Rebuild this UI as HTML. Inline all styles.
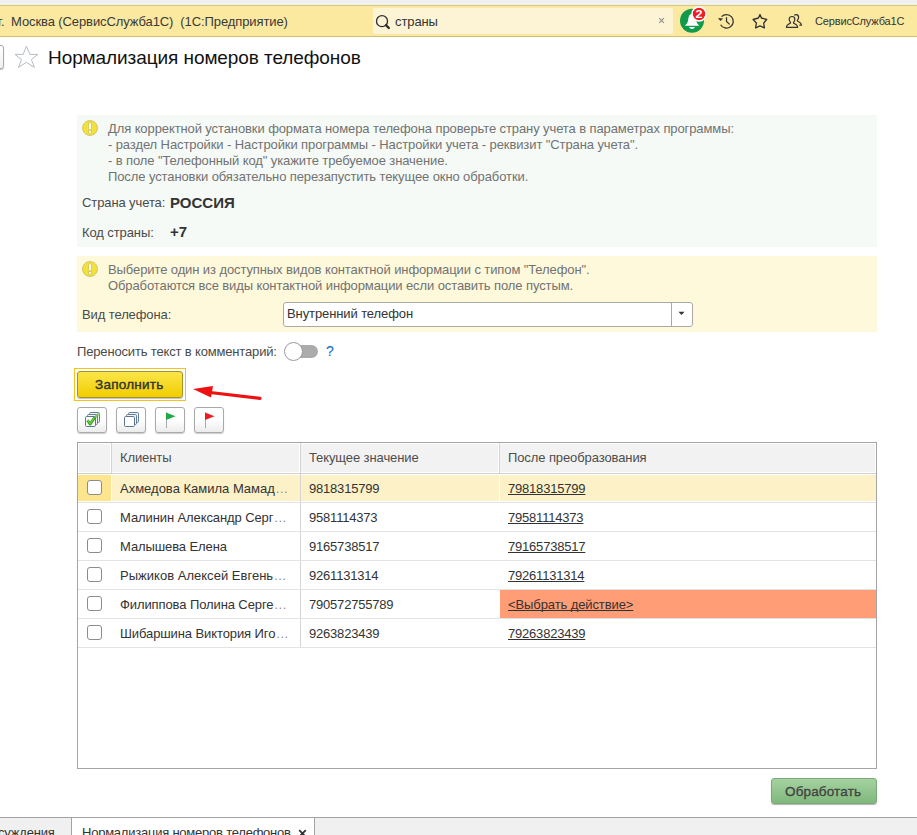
<!DOCTYPE html>
<html><head><meta charset="utf-8">
<style>
*{margin:0;padding:0;box-sizing:border-box}
html,body{width:917px;height:835px;overflow:hidden;background:#fff}
body{position:relative;font-family:"Liberation Sans",sans-serif;font-size:13px;color:#333}
.a{position:absolute}
.t{position:absolute;white-space:nowrap;line-height:16px;font-size:13px;letter-spacing:-0.1px;text-decoration-skip-ink:none}
svg{position:absolute;overflow:visible}
</style></head><body>

<!-- top strip -->
<div class="a" style="left:0;top:0;width:917px;height:5px;background:#f0f0f0"></div>
<div class="a" style="left:0;top:5px;width:917px;height:32px;background:#fbe9a0;border-top:1px solid #d8c679;border-bottom:1px solid #d2bf6f"></div>
<div class="t" style="left:-2px;top:14px;color:#3a3a3a">г.</div>
<div class="t" style="left:11px;top:14px;color:#3a3a3a">Москва (СервисСлужба1С)&nbsp;&nbsp;(1С:Предприятие)</div>

<!-- search -->
<div class="a" style="left:373px;top:8px;width:300px;height:26px;background:#fdf4d5;border-radius:2px"></div>
<svg style="left:374px;top:12px" width="18" height="18" viewBox="0 0 18 18"><circle cx="8" cy="9.2" r="5.5" fill="none" stroke="#2e2e2e" stroke-width="1.3"/><path d="M12 13.2 L14.8 16" stroke="#2e2e2e" stroke-width="2.4" stroke-linecap="round"/></svg>
<div class="t" style="left:395px;top:14px;color:#333">страны</div>
<svg style="left:657px;top:16px" width="9" height="9" viewBox="0 0 9 9"><path d="M2.2 2.2 L6.9 6.9 M6.9 2.2 L2.2 6.9" stroke="#8f8f8f" stroke-width="1.15"/></svg>

<!-- bell -->
<svg style="left:680px;top:6px" width="28" height="28" viewBox="0 0 28 28">
<circle cx="12" cy="14.8" r="12" fill="#109a4a"/>
<path d="M4.9 19.7 L19.3 19.7 C17.7 18.3 16.3 16.6 15.9 13.3 C15.6 10.2 14.5 7.8 12.1 7.8 C9.7 7.8 8.6 10.2 8.3 13.3 C7.9 16.6 6.5 18.3 4.9 19.7 Z" fill="#fff"/>
<path d="M9.1 21 L14.9 21 C14.2 22.5 13.2 22.9 12 22.9 C10.8 22.9 9.8 22.5 9.1 21 Z" fill="#fff"/>
<circle cx="19" cy="8" r="7.0" fill="#f21d24" stroke="#fff" stroke-width="1.6"/>
<text x="0" y="0" transform="translate(19.1 12.0) scale(1.12 1)" font-family="Liberation Sans" font-weight="700" font-size="11.2" fill="#fff" text-anchor="middle">2</text>
</svg>

<!-- history -->
<svg style="left:714px;top:8px" width="28" height="26" viewBox="0 0 28 26">
<path d="M6.61 16.7 A6.8 6.8 0 1 0 7.53 8.66" fill="none" stroke="#333" stroke-width="1.25"/>
<path d="M4 10 L9.1 10.5 L6.4 13.1Z" fill="#333"/>
<path d="M12.5 9.2 L12.5 13.4 L15.6 16.4" fill="none" stroke="#333" stroke-width="1.25"/>
</svg>
<!-- star -->
<svg style="left:748px;top:8px" width="28" height="26" viewBox="0 0 28 26">
<path d="M12 6.5 L13.4 10 L18.7 11.5 L15.7 15 L16.4 19.9 L12 17.8 L7.6 19.9 L8.4 15 L5.1 11.5 L10.4 10 Z" fill="none" stroke="#333" stroke-width="1.3" stroke-linejoin="round"/>
</svg>
<!-- users -->
<svg style="left:782px;top:8px" width="28" height="26" viewBox="0 0 28 26">
<path d="M4.4 19.3 C4.2 17.5 5.5 16.5 8.2 15.2 C8.7 15 8.6 14.5 8.3 14.1 C7.5 13.2 7.2 12.3 7.2 11.2 C7.2 9.4 8.4 8.5 10 8.5 C11.6 8.5 12.8 9.4 12.8 11.2 C12.8 12.3 12.5 13.2 11.7 14.1 C11.4 14.5 11.3 15 11.8 15.2 C14.5 16.5 15.8 17.5 15.6 19.3 Z" fill="none" stroke="#333" stroke-width="1.2" stroke-linejoin="round"/>
<path d="M12.3 7.2 C12.8 6.8 13.3 6.6 14 6.6 C15.6 6.6 16.6 7.6 16.6 9.3 C16.6 10.4 16.3 11.2 15.5 12.1 C15.2 12.5 15.2 13 15.7 13.2 C18.2 14.4 19.6 15.3 19.4 17.1 L17.4 17.1" fill="none" stroke="#333" stroke-width="1.2" stroke-linejoin="round"/>
</svg>
<div class="t" style="left:815px;top:13px;font-size:11px;color:#333;letter-spacing:-0.15px">СервисСлужба1С</div>

<!-- title row -->
<div class="a" style="left:-20px;top:45px;width:24px;height:24px;border:1px solid #a8a8a8;border-radius:3px;background:linear-gradient(#fff,#f0f0f0);box-shadow:0 1px 1px rgba(0,0,0,.25)"></div>
<svg style="left:0;top:0" width="50" height="80" viewBox="0 0 50 80"><path d="M26.4 46.2 L30 54.4 L37.9 54.4 L31.4 59.5 L34.4 67.4 L26.4 62.3 L18.5 67.4 L21.5 59.5 L15 54.4 L23.2 54.4 Z" fill="none" stroke="#b4bcc4" stroke-width="1"/></svg>
<div class="t" style="left:48px;top:47px;font-size:19px;line-height:22px;color:#111;letter-spacing:-0.08px">Нормализация номеров телефонов</div>

<!-- info block 1 -->
<div class="a" style="left:77px;top:115px;width:800px;height:132px;background:#f5faf6"></div>
<svg style="left:82px;top:120px" width="16" height="16" viewBox="0 0 16 16"><circle cx="8" cy="8" r="7.5" fill="#f2e03c" stroke="#cdbb66" stroke-width="0.8"/><rect x="6.8" y="3" width="2.4" height="6.5" fill="#fff" stroke="#b8a850" stroke-width="0.4"/><rect x="6.8" y="10.7" width="2.4" height="2.3" fill="#fff" stroke="#b8a850" stroke-width="0.4"/></svg>
<div class="t" style="left:108px;top:121px;color:#727272;line-height:16px">Для корректной установки формата номера телефона проверьте страну учета в параметрах программы:<br>- раздел Настройки - Настройки программы - Настройки учета - реквизит "Страна учета".<br>- в поле "Телефонный код" укажите требуемое значение.<br>После установки обязательно перезапустить текущее окно обработки.</div>
<div class="t" style="left:82px;top:195px;color:#4a4a4a">Страна учета:</div>
<div class="t" style="left:170px;top:194px;color:#333;font-size:15px;font-weight:700;line-height:18px;letter-spacing:0">РОССИЯ</div>
<div class="t" style="left:82px;top:225px;color:#4a4a4a">Код страны:</div>
<div class="t" style="left:170px;top:223px;color:#333;font-size:15px;font-weight:700;line-height:18px;letter-spacing:0">+7</div>

<!-- info block 2 -->
<div class="a" style="left:77px;top:256px;width:800px;height:76px;background:#fef9db"></div>
<svg style="left:82px;top:261px" width="16" height="16" viewBox="0 0 16 16"><circle cx="8" cy="8" r="7.5" fill="#f2e03c" stroke="#cdbb66" stroke-width="0.8"/><rect x="6.8" y="3" width="2.4" height="6.5" fill="#fff" stroke="#b8a850" stroke-width="0.4"/><rect x="6.8" y="10.7" width="2.4" height="2.3" fill="#fff" stroke="#b8a850" stroke-width="0.4"/></svg>
<div class="t" style="left:108px;top:262px;color:#727272">Выберите один из доступных видов контактной информации с типом "Телефон".<br>Обработаются все виды контактной информации если оставить поле пустым.</div>
<div class="t" style="left:82px;top:307px;color:#4a4a4a">Вид телефона:</div>
<div class="a" style="left:283px;top:302px;width:410px;height:25px;background:#fff;border:1px solid #a9a9a9;border-radius:3px"></div>
<div class="a" style="left:671px;top:303px;width:1px;height:23px;background:#a9a9a9"></div>
<svg style="left:678px;top:311px" width="7" height="5" viewBox="0 0 7 5"><path d="M0.5 0.8 L6.5 0.8 L3.5 4Z" fill="#333"/></svg>
<div class="t" style="left:287px;top:306px;color:#333">Внутренний телефон</div>

<!-- toggle -->
<div class="t" style="left:77px;top:344px;color:#4a4a4a;letter-spacing:-0.16px">Переносить текст в комментарий:</div>
<div class="a" style="left:288px;top:345px;width:30px;height:13px;background:#ababab;border-radius:7px"></div>
<div class="a" style="left:284px;top:342px;width:19px;height:19px;background:#fff;border:1px solid #9a9a9a;border-radius:50%"></div>
<div class="t" style="left:326px;top:343px;color:#1a72c4;font-size:14px;-webkit-text-stroke:0.15px #1a72c4">?</div>

<!-- fill button -->
<div class="a" style="left:74px;top:368px;width:112px;height:33px;border:1px solid #f6c21a"></div>
<div class="a" style="left:77px;top:371px;width:106px;height:27px;border:1px solid #a89420;border-radius:3px;background:linear-gradient(#fbe64a,#f1cd00);box-shadow:0 1px 1px rgba(0,0,0,.25)"></div>
<div class="t" style="left:95px;top:377px;color:#333;font-size:13.5px;letter-spacing:0.25px;-webkit-text-stroke:0.4px #333">Заполнить</div>

<!-- red arrow -->
<svg style="left:188px;top:380px" width="80" height="24" viewBox="0 0 80 24">
<path d="M22 12.5 L72 18.3" stroke="#ee1111" stroke-width="3.2" stroke-linecap="round"/>
<path d="M5 9 L25 6 L23 17.5Z" fill="#ee1111"/>
</svg>

<!-- small toolbar -->
<div class="a" style="left:77px;top:407px;width:30px;height:26px;border:1px solid #a9a9a9;border-radius:3px;background:linear-gradient(#fff 50%,#ececec);box-shadow:0 1px 1px rgba(0,0,0,.2)"></div>
<div class="a" style="left:116px;top:407px;width:30px;height:26px;border:1px solid #a9a9a9;border-radius:3px;background:linear-gradient(#fff 50%,#ececec);box-shadow:0 1px 1px rgba(0,0,0,.2)"></div>
<div class="a" style="left:155px;top:407px;width:30px;height:26px;border:1px solid #a9a9a9;border-radius:3px;background:linear-gradient(#fff 50%,#ececec);box-shadow:0 1px 1px rgba(0,0,0,.2)"></div>
<div class="a" style="left:194px;top:407px;width:30px;height:26px;border:1px solid #a9a9a9;border-radius:3px;background:linear-gradient(#fff 50%,#ececec);box-shadow:0 1px 1px rgba(0,0,0,.2)"></div>
<svg style="left:84px;top:411px" width="18" height="18" viewBox="0 0 18 18">
<rect x="5.5" y="1.5" width="10" height="10" rx="1.2" fill="#f4f6f8" stroke="#5a7896" stroke-width="0.95"/>
<path d="M7.5 5.26 L10.14 9.1 L14.9 2.14" fill="none" stroke="#9ad47e" stroke-width="2.4"/>
<rect x="3.5" y="3.5" width="10" height="10" rx="1.2" fill="#f4f6f8" stroke="#5a7896" stroke-width="0.95"/>
<path d="M5.5 7.26 L8.14 11.1 L12.9 4.14" fill="none" stroke="#8acc6c" stroke-width="2.4"/>
<rect x="1.5" y="5.5" width="10" height="10" rx="1.2" fill="#fff" stroke="#52708e" stroke-width="0.95"/>
<path d="M3.5 9.26 L6.14 13.1 L10.9 6.14" fill="none" stroke="#3aa11c" stroke-width="2.8" stroke-linejoin="round"/>
<path d="M3.8 9.4 L6.14 12.6 L10.6 6.4" fill="none" stroke="#6fce44" stroke-width="1.2" stroke-linejoin="round"/>
</svg>
<svg style="left:123px;top:411px" width="18" height="18" viewBox="0 0 18 18">
<rect x="5.5" y="1.5" width="10" height="10" rx="1.2" fill="#f2f4f6" stroke="#5a7896" stroke-width="0.95"/>
<rect x="3.5" y="3.5" width="10" height="10" rx="1.2" fill="#f2f4f6" stroke="#5a7896" stroke-width="0.95"/>
<rect x="1.5" y="5.5" width="10" height="10" rx="1.2" fill="#fff" stroke="#52708e" stroke-width="0.95"/>
</svg>
<svg style="left:162px;top:411px" width="16" height="18" viewBox="0 0 16 18">
<path d="M4.5 1.5 L4.5 17" stroke="#a3aab2" stroke-width="1"/>
<path d="M4 1.5 L13.5 5.2 L4 9Z" fill="#1faa44"/>
</svg>
<svg style="left:201px;top:411px" width="16" height="18" viewBox="0 0 16 18">
<path d="M4.5 1.5 L4.5 17" stroke="#a3aab2" stroke-width="1"/>
<path d="M4 1.5 L13.5 5.2 L4 9Z" fill="#ee1b22"/>
</svg>

<!-- table -->
<div class="a" style="left:77px;top:442px;width:800px;height:327px;border:1px solid #a4a4a4;background:#fff"></div>
<!-- header -->
<div class="a" style="left:78px;top:443px;width:798px;height:30px;background:#fff"></div>
<div class="a" style="left:79px;top:444px;width:31px;height:28px;background:#f2f2f2"></div>
<div class="a" style="left:112px;top:444px;width:187px;height:28px;background:#f2f2f2"></div>
<div class="a" style="left:301px;top:444px;width:197px;height:28px;background:#f2f2f2"></div>
<div class="a" style="left:500px;top:444px;width:375px;height:28px;background:#f2f2f2"></div>
<div class="a" style="left:111px;top:443px;width:1px;height:30px;background:#d4d4d4"></div>
<div class="a" style="left:499px;top:443px;width:1px;height:30px;background:#d4d4d4"></div>
<div class="a" style="left:78px;top:473px;width:798px;height:1px;background:#d0d0d0"></div>
<div class="t" style="left:120px;top:450px;color:#4d4d4d">Клиенты</div>
<div class="t" style="left:309px;top:450px;color:#4d4d4d">Текущее значение</div>
<div class="t" style="left:508px;top:450px;color:#4d4d4d">После преобразования</div>
<!-- col line -->
<div class="a" style="left:300px;top:443px;width:1px;height:205px;background:#d4d4d4"></div>

<!-- selected row -->
<div class="a" style="left:78px;top:475px;width:33px;height:26px;background:#fde48e"></div>
<div class="a" style="left:112px;top:475px;width:188px;height:26px;background:#fdf1c7"></div>
<div class="a" style="left:301px;top:475px;width:198px;height:26px;background:#fdf1c7"></div>
<div class="a" style="left:500px;top:475px;width:376px;height:26px;background:#fdf1c7"></div>

<!-- orange cell -->
<div class="a" style="left:500px;top:590px;width:376px;height:28px;background:#ff9d77"></div>

<!-- row separators -->
<div class="a" style="left:78px;top:502px;width:798px;height:1px;background:#e3e3e3"></div>
<div class="a" style="left:78px;top:531px;width:798px;height:1px;background:#e3e3e3"></div>
<div class="a" style="left:78px;top:560px;width:798px;height:1px;background:#e3e3e3"></div>
<div class="a" style="left:78px;top:589px;width:798px;height:1px;background:#e3e3e3"></div>
<div class="a" style="left:78px;top:618px;width:798px;height:1px;background:#e3e3e3"></div>
<div class="a" style="left:78px;top:647px;width:798px;height:1px;background:#e3e3e3"></div>

<!-- checkboxes -->
<div class="a" style="left:87px;top:480px;width:15px;height:15px;border:1.5px solid #8c8c8c;border-radius:3px;background:#fff"></div>
<div class="a" style="left:87px;top:509px;width:15px;height:15px;border:1.5px solid #8c8c8c;border-radius:3px;background:#fff"></div>
<div class="a" style="left:87px;top:538px;width:15px;height:15px;border:1.5px solid #8c8c8c;border-radius:3px;background:#fff"></div>
<div class="a" style="left:87px;top:567px;width:15px;height:15px;border:1.5px solid #8c8c8c;border-radius:3px;background:#fff"></div>
<div class="a" style="left:87px;top:596px;width:15px;height:15px;border:1.5px solid #8c8c8c;border-radius:3px;background:#fff"></div>
<div class="a" style="left:87px;top:625px;width:15px;height:15px;border:1.5px solid #8c8c8c;border-radius:3px;background:#fff"></div>

<!-- row texts -->
<div class="t" style="left:120px;top:481px;letter-spacing:0px">Ахмедова Камила Мамад<span style="color:#8c8c8c;margin-left:1px;letter-spacing:0.5px">...</span></div>
<div class="t" style="left:120px;top:510px;letter-spacing:-0.1px">Малинин Александр Серг<span style="color:#8c8c8c;margin-left:1px;letter-spacing:0.5px">...</span></div>
<div class="t" style="left:120px;top:539px">Малышева Елена</div>
<div class="t" style="left:120px;top:568px;letter-spacing:0.02px">Рыжиков Алексей Евгень<span style="color:#8c8c8c;margin-left:1px;letter-spacing:0.5px">...</span></div>
<div class="t" style="left:120px;top:597px;letter-spacing:-0.1px">Филиппова Полина Серге<span style="color:#8c8c8c;margin-left:1px;letter-spacing:0.5px">...</span></div>
<div class="t" style="left:120px;top:626px;letter-spacing:-0.1px">Шибаршина Виктория Иго<span style="color:#8c8c8c;margin-left:1px;letter-spacing:0.5px">...</span></div>

<div class="t" style="left:309px;top:481px;letter-spacing:-0.2px">9818315799</div>
<div class="t" style="left:309px;top:510px;letter-spacing:-0.2px">9581114373</div>
<div class="t" style="left:309px;top:539px;letter-spacing:-0.2px">9165738517</div>
<div class="t" style="left:309px;top:568px;letter-spacing:-0.2px">9261131314</div>
<div class="t" style="left:309px;top:597px;letter-spacing:-0.2px">790572755789</div>
<div class="t" style="left:309px;top:626px;letter-spacing:-0.2px">9263823439</div>

<div class="t" style="left:508px;top:481px;text-decoration:underline;letter-spacing:-0.2px">79818315799</div>
<div class="t" style="left:508px;top:510px;text-decoration:underline;letter-spacing:-0.2px">79581114373</div>
<div class="t" style="left:508px;top:539px;text-decoration:underline;letter-spacing:-0.2px">79165738517</div>
<div class="t" style="left:508px;top:568px;text-decoration:underline;letter-spacing:-0.2px">79261131314</div>
<div class="t" style="left:508px;top:597px;text-decoration:underline">&lt;Выбрать действие&gt;</div>
<div class="t" style="left:508px;top:626px;text-decoration:underline;letter-spacing:-0.2px">79263823439</div>

<!-- process button -->
<div class="a" style="left:771px;top:778px;width:106px;height:26px;border:1px solid #7aa877;border-radius:3px;background:linear-gradient(#a5d2a0,#7fb87b);box-shadow:0 1px 1px rgba(0,0,0,.3)"></div>
<div class="t" style="left:785px;top:784px;color:#444;font-size:13.5px;letter-spacing:0.15px;-webkit-text-stroke:0.35px #444">Обработать</div>

<!-- bottom tabs -->
<div class="a" style="left:0;top:817px;width:917px;height:18px;background:#f0f0f0;border-top:1px solid #a3a3a3"></div>
<div class="a" style="left:72px;top:818px;width:242px;height:17px;background:#fff"></div>
<div class="a" style="left:71px;top:818px;width:1px;height:17px;background:#a3a3a3"></div>
<div class="a" style="left:314px;top:818px;width:1px;height:17px;background:#a3a3a3"></div>
<div class="t" style="left:-19px;top:825px;color:#333;letter-spacing:-0.2px">Обсуждения</div>
<div class="t" style="left:82px;top:825px;color:#333;letter-spacing:-0.23px">Нормализация номеров телефонов</div>
<svg style="left:298px;top:829px" width="9" height="9" viewBox="0 0 9 9"><path d="M1.2 1.2 L7.8 7.8 M7.8 1.2 L1.2 7.8" stroke="#333" stroke-width="1.8"/></svg>

</body></html>
